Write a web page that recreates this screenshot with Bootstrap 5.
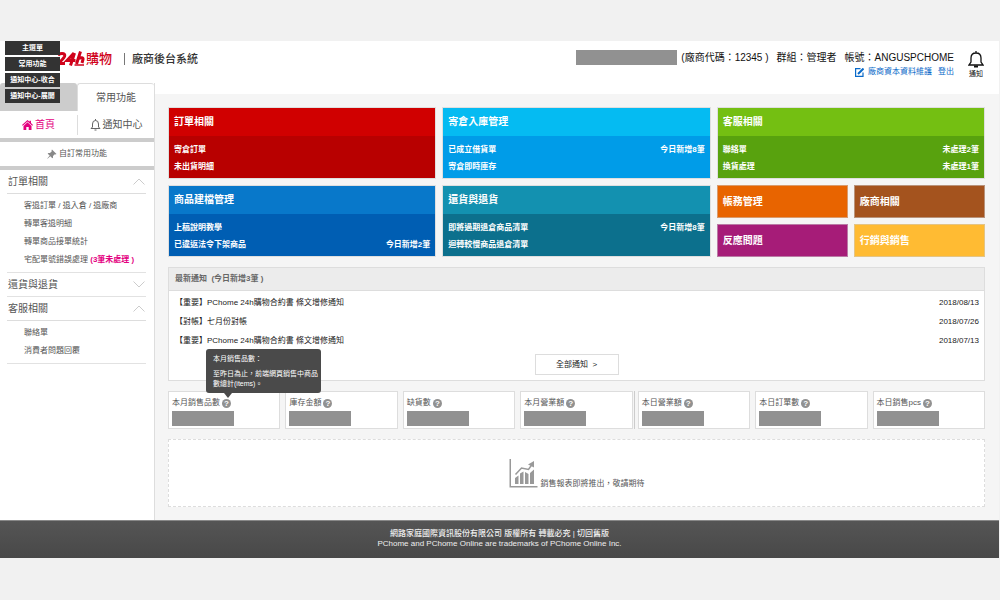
<!DOCTYPE html>
<html lang="zh-Hant">
<head>
<meta charset="utf-8">
<meta name="viewport" content="width=device-width, initial-scale=1">
<title>廠商後台系統</title>
<link href="https://cdn.jsdelivr.net/npm/bootstrap@5.3.0/dist/css/bootstrap.min.css" rel="stylesheet">
<style>
  body { background: #f1f1f1; font-family: "Liberation Sans", "Noto Sans CJK TC", sans-serif; font-size: 8px; line-height: 12px; color: #333; padding-top: 41px; }
  a { text-decoration: none; color: inherit; }
  ul { list-style: none; margin: 0; padding: 0; }
  .page-shell { background: #f5f5f5; margin-right: 1px; }

  .top-bar { background: #fff; height: 53px; padding: 9px 14px 0 58px; }
  .logo-mark { width: 28px; height: 16px; }
  .logo-name { color: #d0021b; font-size: 13px; line-height: 18px; font-weight: 500; }
  .logo-rule { width: 1px; height: 12px; background: #777; margin: 0 7px 0 12px; }
  .system-name { font-size: 11px; line-height: 18px; font-weight: 500; margin: 0; }
  .masked { background: #919191; }
  .vendor-mask { width: 101px; height: 15px; }
  .account { font-size: 10px; line-height: 16px; color: #111; gap: 8px; }
  .account-links { color: #0a6ac9; gap: 6px; line-height: 12px; }
  .bell-btn { background: none; border: 0; padding: 0; color: #111; font-size: 7px; line-height: 9px; width: 18px; margin-left: 13px; }

  .state-menu { position: absolute; left: 5px; top: 41px; width: 55px; gap: 2px; z-index: 5; }
  .state-menu button { border: 0; background: #333; color: #fff; font-size: 7px; font-weight: 700; line-height: 14px; padding: 0; height: 14px; white-space: nowrap; }

  .side { width: 155px; flex: none; margin-top: -11px; background: #fff; border-right: 1px solid #ddd; color: #555; }
  .tab-item { height: 28px; font-size: 10px; line-height: 27px; border: 0; padding: 0; }
  .tab-off { background: #ccc; border-radius: 3px 3px 0 0; }
  .tab-on { background: #fff; color: #555; border: 1px solid #ddd; border-width: 1px 0 0 1px; border-radius: 3px 3px 0 0; }
  .side-nav { height: 27px; font-size: 10px; padding: 4px 0 3px; }
  .side-nav a { gap: 2px; }
  .side-nav a + a { border-left: 1px solid #ddd; }
  .side-nav .current { color: #e4007f; }
  .custom-link { height: 32px; border: solid #ccc; border-width: 4px 0; gap: 2px; }
  .menu-group { margin: 0 8px 0 7px; border-bottom: 1px solid #e2e2e2; }
  .menu-group > button { border: 0; background: none; color: #555; font-size: 10px; line-height: 23px; padding: 0 1px; width: 100%; }
  .menu-group ul { border-top: 1px solid #ddd; padding: 3px 0 3px 17px; }
  .menu-group li { line-height: 18px; white-space: nowrap; }
  .menu-group .todo { color: #e4007f; font-weight: 700; }

  .content-area { padding: 13px 14px 13px 13px; }
  .tiles { display: grid; grid-template-columns: repeat(3, 1fr); gap: 6px; }
  .tile { color: #fff; font-weight: 700; border: 1px solid #ccc8; height: 72px; }
  .tile h2, .mini-tile { font-size: 10px; font-weight: 700; margin: 0; padding: 0 5px; }
  .tile h2 { line-height: 28px; }
  .tile ul { padding: 5px 5px 0; height: 42px; }
  .tile li { line-height: 17px; }
  .minis { display: grid; grid-template-columns: 1fr 1fr; gap: 6px; }
  .mini-tile { color: #fff; border: 1px solid #ccc8; line-height: 32px; height: 33px; }
  .red h2 { background: #d00000; } .red ul { background: #b80000; }
  .cyan h2 { background: #05bbf2; } .cyan ul { background: #009ce8; }
  .green h2 { background: #74bf12; } .green ul { background: #58a20e; }
  .blue h2 { background: #0878ca; } .blue ul { background: #005eb3; }
  .teal h2 { background: #1391b0; } .teal ul { background: #0c708d; }
  .orange { background: #e86400; } .brown { background: #a4531e; } .purple { background: #a61c78; } .amber { background: #ffbb33; }

  .notices { margin-top: 10px; background: #fff; border: 1px solid #ddd; height: 114px; }
  .notices h2 { font-size: 8px; font-weight: 700; line-height: 22px; color: #666; background: #ececec; border-bottom: 1px solid #ddd; margin: 0 0 2px; padding: 0 6px; }
  .notices li { line-height: 19px; padding: 0 5px 0 6px; color: #222; }
  .all-btn { background: #fff; border: 1px solid #ddd; border-radius: 0; width: 84px; height: 21px; padding: 0; font-size: 8px; line-height: 19px; margin-top: 4px; color: #222; }

  .stats { display: grid; grid-template-columns: repeat(7, 1fr); gap: 5px; margin-top: 10px; }
  .stat { position: relative; background: #fff; border: 1px solid #ddd; height: 38px; padding: 5px 3px 0; color: #555; }
  .stat-head { gap: 2px; line-height: 12px; margin-bottom: 2px; }
  .stat .masked { width: 62px; height: 15px; }
  .stat-split { box-shadow: 1px 0 0 #f5f5f5, 2px 0 0 #ccc; }
  .help { width: 9px; height: 9px; border: 0; padding: 0; border-radius: 50%; background: #919191; color: #fff; font-size: 8px; font-weight: 700; line-height: 9px; }
  .tip { position: absolute; left: 37px; bottom: 35px; width: 115px; padding: 5px 7px 4px; background: #4a4a4a; color: #fff; border-radius: 3px; font-size: 7px; line-height: 10px; z-index: 4; }
  .tip p { margin: 0 0 5px; white-space: nowrap; }
  .tip p:last-child { margin: 0; }
  .tip::after { content: ""; position: absolute; left: 18px; top: 100%; border: solid transparent; border-width: 5px 4px 0; border-top-color: #4a4a4a; }

  .report { margin-top: 10px; height: 68px; background: #fff; border: 1px dashed #ddd; color: #555; gap: 3px; padding-bottom: 18px; }
  .report span { line-height: 8px; }
  .foot { background: linear-gradient(#555, #484848); border-top: 1px solid #888; color: #eee; margin-right: 1px; padding: 8px 0; line-height: 10px; height: 38px; font-weight: 500; }
</style>
</head>
<body>
<nav class="state-menu d-flex flex-column" aria-label="狀態">
  <button type="button">主選單</button>
  <button type="button">常用功能</button>
  <button type="button">通知中心-收合</button>
  <button type="button">通知中心-展開</button>
</nav>

<div class="page-shell">
  <header class="top-bar d-flex justify-content-between align-items-start">
    <a href="#" class="d-flex align-items-center">
      <svg class="logo-mark" viewBox="0 0 28 16" fill="none" stroke="#d0021b" stroke-width="3"><path d="M0 4.500Q1 2.500 4 2.500Q7.500 2.500 6.500 5.500Q5.500 8 0 12.500H7"/><path d="M16 2L9 9.500H17.500M16.500 2L12.500 14.500"/><path d="M22.500 .5L18.500 13M20 7.500Q25.500 5.500 25 8.500L24 12"/><path d="M16.500 14H26" stroke-width="1.500"/></svg>
      <span class="logo-name">購物</span>
      <span class="logo-rule"></span>
      <h1 class="system-name">廠商後台系統</h1>
    </a>
    <div class="d-flex">
      <div class="d-flex flex-column align-items-end">
        <div class="account d-flex">
          <span class="d-flex gap-1"><span class="masked vendor-mask"></span><span>(廠商代碼：12345 )</span></span><span>群組：管理者</span><span>帳號：ANGUSPCHOME</span>
        </div>
        <div class="account-links d-flex">
          <a href="#" class="d-flex align-items-center"><svg class="me-1" width="9" height="9" viewBox="0 0 9 9" fill="none" stroke="#0a6ac9" stroke-width="1.200"><path d="M5.500 .6H.6V8.400H8V4.500"/><path d="M3 6L8.500 .5" stroke-width="2"/></svg>廠商資本資料維護</a>
          <a href="#">登出</a>
        </div>
      </div>
      <button type="button" class="bell-btn"><svg width="16" height="19" viewBox="0 0 16 19" fill="none" stroke="#111" stroke-width="1.300"><path d="M8 1V3M1 15H15L13 12V8Q13 3 8 3Q3 3 3 8V12Z"/><path d="M6 16.500H10" stroke-width="2"/></svg><br>通知</button>
    </div>
  </header>

  <div class="d-flex">
    <aside class="side">
      <div class="d-flex">
        <button type="button" class="tab-item tab-off w-50" aria-label="主選單"></button>
        <button type="button" class="tab-item tab-on w-50">常用功能</button>
      </div>
      <nav class="side-nav d-flex">
        <a href="#" class="current w-50 d-flex align-items-center justify-content-center"><svg width="11" height="10" viewBox="0 0 11 10" fill="#e4007f"><path d="M5.500 0L7.500 1.800V.8H9V3.100L11 5L10.200 5.800L5.500 1.600L.8 5.800L0 5Z"/><path d="M5.500 2.300L9.500 5.900V10H6.700V7H4.300V10H1.500V5.900Z"/></svg>首頁</a>
        <a href="#" class="w-50 d-flex align-items-center justify-content-center"><svg width="11" height="12" viewBox="0 0 11 12" fill="none" stroke="#666"><path d="M5.500 0V1.500M1 9.500H10L8.500 8V5Q8.500 1.500 5.500 1.500Q2.500 1.500 2.500 5V8ZM4.500 11H6.500"/></svg>通知中心</a>
      </nav>
      <a href="#" class="custom-link d-flex align-items-center justify-content-center"><svg width="10" height="10" viewBox="0 0 10 10" fill="#888"><path d="M5 .5L9.500 5L8.500 5.500L7.800 5.200L6 7L6 8.700L5.300 9.300L3.300 7.200L.5 9.700L.3 9.500L2.700 6.600L.7 4.700L1.300 4L3 4L4.800 2.200L4.500 1.300Z"/></svg>自訂常用功能</a>
      <section class="menu-group">
        <button type="button" class="d-flex justify-content-between align-items-center">訂單相關<svg width="12" height="7" viewBox="0 0 12 7" fill="none" stroke="#ccc"><path d="M.5 6.500L6 1L11.500 6.500"/></svg></button>
        <ul>
          <li><a href="#">客退訂單 / 退入倉 / 退廠商</a></li>
          <li><a href="#">轉單客退明細</a></li>
          <li><a href="#">轉單商品接單統計</a></li>
          <li><a href="#">宅配單號錯誤處理 <span class="todo">(3筆未處理 )</span></a></li>
        </ul>
      </section>
      <section class="menu-group">
        <button type="button" class="d-flex justify-content-between align-items-center">還貨與退貨<svg width="12" height="7" viewBox="0 0 12 7" fill="none" stroke="#ccc"><path d="M.5 .5L6 6L11.500 .5"/></svg></button>
      </section>
      <section class="menu-group">
        <button type="button" class="d-flex justify-content-between align-items-center">客服相關<svg width="12" height="7" viewBox="0 0 12 7" fill="none" stroke="#ccc"><path d="M.5 6.500L6 1L11.500 6.500"/></svg></button>
        <ul>
          <li><a href="#">聯絡單</a></li>
          <li><a href="#">消費者問題回覆</a></li>
        </ul>
      </section>
    </aside>

    <main class="content-area flex-grow-1">
      <div class="tiles">
        <section class="tile red"><h2>訂單相關</h2><ul><li><a href="#">寄倉訂單</a></li><li><a href="#">未出貨明細</a></li></ul></section>
        <section class="tile cyan"><h2>寄倉入庫管理</h2><ul><li class="d-flex justify-content-between"><a href="#">已成立借貨單</a><span>今日新增8筆</span></li><li><a href="#">寄倉即時庫存</a></li></ul></section>
        <section class="tile green"><h2>客服相關</h2><ul><li class="d-flex justify-content-between"><a href="#">聯絡單</a><span>未處理2筆</span></li><li class="d-flex justify-content-between"><a href="#">換貨處理</a><span>未處理1筆</span></li></ul></section>
        <section class="tile blue"><h2>商品建檔管理</h2><ul><li><a href="#">上稿說明教學</a></li><li class="d-flex justify-content-between"><a href="#">已違返法令下架商品</a><span>今日新增2筆</span></li></ul></section>
        <section class="tile teal"><h2>還貨與退貨</h2><ul><li class="d-flex justify-content-between"><a href="#">即將過期退倉商品清單</a><span>今日新增8筆</span></li><li><a href="#">迴轉較慢商品退倉清單</a></li></ul></section>
        <div class="minis">
          <a href="#" class="mini-tile orange">帳務管理</a>
          <a href="#" class="mini-tile brown">廠商相關</a>
          <a href="#" class="mini-tile purple">反應問題</a>
          <a href="#" class="mini-tile amber">行銷與銷售</a>
        </div>
      </div>

      <section class="notices">
        <h2>最新通知&nbsp; (今日新增3筆 )</h2>
        <ul>
          <li class="d-flex justify-content-between"><a href="#">【重要】PChome 24h購物合約書 條文增修通知</a><time>2018/08/13</time></li>
          <li class="d-flex justify-content-between"><a href="#">【對帳】七月份對帳</a><time>2018/07/26</time></li>
          <li class="d-flex justify-content-between"><a href="#">【重要】PChome 24h購物合約書 條文增修通知</a><time>2018/07/13</time></li>
        </ul>
        <div class="text-center"><button type="button" class="all-btn">全部通知&nbsp; &gt;</button></div>
      </section>

      <div class="stats">
        <div class="stat">
          <div class="tip" role="tooltip"><p>本月銷售品數：</p><p>至昨日為止，前端網頁銷售中商品<br>數總計(items)。</p></div>
          <div class="stat-head d-flex align-items-center">本月銷售品數<button type="button" class="help">?</button></div><div class="masked"></div>
        </div>
        <div class="stat"><div class="stat-head d-flex align-items-center">庫存金額<button type="button" class="help">?</button></div><div class="masked"></div></div>
        <div class="stat"><div class="stat-head d-flex align-items-center">缺貨數<button type="button" class="help">?</button></div><div class="masked"></div></div>
        <div class="stat stat-split"><div class="stat-head d-flex align-items-center">本月營業額<button type="button" class="help">?</button></div><div class="masked"></div></div>
        <div class="stat"><div class="stat-head d-flex align-items-center">本日營業額<button type="button" class="help">?</button></div><div class="masked"></div></div>
        <div class="stat"><div class="stat-head d-flex align-items-center">本日訂單數<button type="button" class="help">?</button></div><div class="masked"></div></div>
        <div class="stat"><div class="stat-head d-flex align-items-center">本日銷售pcs<button type="button" class="help">?</button></div><div class="masked"></div></div>
      </div>

      <section class="report d-flex justify-content-center align-items-end">
        <svg width="29" height="29" viewBox="0 0 29 29" fill="#999"><path d="M.5 0H2V27H28.500V28.500H.5Z"/><path d="M6 19L9.500 16.500V25H6ZM11 14.500L14.500 12.500V25H11ZM16 13L19.500 15V25H16ZM21 14L25 10.500V25H21Z"/><path d="M6.500 15.500L12.500 9L19.500 10.500L23 5.500" fill="none" stroke="#999" stroke-width="1.500"/><path d="M19 5.500L25 2V8.500Z"/></svg>
        <span>銷售報表即將推出，敬請期待</span>
      </section>
    </main>
  </div>
</div>
<footer class="foot text-center">
  <div>網路家庭國際資訊股份有限公司 版權所有 轉載必究 | <a href="#">切回舊版</a></div>
  <div>PChome and PChome Online are trademarks of PChome Online Inc.</div>
</footer>
<script src="https://cdn.jsdelivr.net/npm/bootstrap@5.3.0/dist/js/bootstrap.bundle.min.js"></script>
</body>
</html>
